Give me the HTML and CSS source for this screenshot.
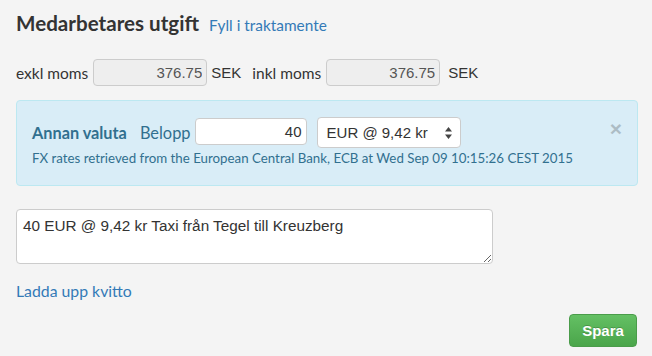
FILE: index.html
```html
<!DOCTYPE html>
<html lang="sv">
<head>
<meta charset="utf-8">
<title>Medarbetares utgift</title>
<link rel="stylesheet" href="styles.css">
</head>
<body>
<div class="page">
  <div class="header">
    <h2 class="title">Medarbetares utgift</h2>
    <a class="link" href="#">Fyll i traktamente</a>
  </div>

  <div class="amounts">
    <label class="lbl">exkl moms</label>
    <input class="amount" type="text" value="376.75" readonly>
    <span class="cur">SEK</span>
    <label class="lbl lbl-second">inkl moms</label>
    <input class="amount" type="text" value="376.75" readonly>
    <span class="cur cur-second">SEK</span>
  </div>

  <div class="alert">
    <div class="alert-row">
      <strong class="alert-title">Annan valuta</strong>
      <span class="alert-lbl">Belopp</span>
      <input class="belopp" type="text" value="40">
      <span class="select-wrap">
        <select class="currency"><option>EUR @ 9,42 kr</option></select>
        <svg class="select-arrows" width="7" height="12" viewBox="0 0 7 12"><path d="M3.5 0L7 4.5H0z M0 7.5H7L3.5 12z" fill="#444"/></svg>
      </span>
      <span class="close">&times;</span>
    </div>
    <p class="fx">FX rates retrieved from the European Central Bank, ECB at Wed Sep 09 10:15:26 CEST 2015</p>
  </div>

  <textarea class="note">40 EUR @ 9,42 kr Taxi från Tegel till Kreuzberg</textarea>

  <a class="link upload" href="#">Ladda upp kvitto</a>

  <div class="actions">
    <button class="btn-save" type="button">Spara</button>
  </div>
</div>
</body>
</html>
```

FILE: styles.css
```css
html, body {
  margin: 0;
  padding: 0;
  background: #f4f4f4;
}

body {
  font-family: Lato, "Open Sans", sans-serif;
  font-size: 15.5px;
  color: #333;
}

.page {
  padding: 0 14px 0 16px;
  display: flex;
  flex-direction: column;
}

.header {
  display: flex;
  align-items: baseline;
  margin-top: 11px;
  height: 24px;
}

.title {
  margin: 0;
  font-size: 20.6px;
  font-weight: 700;
  line-height: 24px;
  color: #333;
}

.link {
  color: #337ab7;
  text-decoration: none;
  font-size: 15.4px;
}

.header .link {
  margin-left: 10px;
}

.amounts {
  display: flex;
  align-items: center;
  margin-top: 24px;
  height: 27px;
}

.lbl {
  font-size: 15.5px;
  color: #333;
  margin-right: 5px;
}

.lbl-second {
  margin-left: 11px;
}

.amount {
  box-sizing: border-box;
  width: 114px;
  height: 27px;
  padding: 3px 4px;
  border: 1px solid #ccc;
  border-radius: 4px;
  background: #eee;
  font-family: "Liberation Sans", Arial, sans-serif;
  font-size: 15px;
  color: #555;
  text-align: right;
  outline: none;
}

.cur {
  margin-left: 4px;
  font-family: "Liberation Sans", Arial, sans-serif;
  font-size: 15px;
  color: #333;
}

.cur-second {
  margin-left: 8px;
}

.alert {
  margin-top: 14px;
  background: #d9edf7;
  border: 1px solid #bce8f1;
  border-radius: 4px;
  color: #31708f;
  padding: 16px 15px 18px 15px;
}

.alert-row {
  display: flex;
  align-items: center;
  height: 31px;
}

.alert-title {
  font-weight: 700;
  font-size: 16.3px;
}

.alert-lbl {
  margin-left: 13px;
  margin-right: 4px;
  font-size: 16.4px;
}

.belopp {
  box-sizing: border-box;
  width: 112px;
  height: 27px;
  margin-top: -2px;
  padding: 3px 4px;
  border: 1px solid #ccc;
  border-radius: 4px;
  background: #fff;
  font-family: "Liberation Sans", Arial, sans-serif;
  font-size: 15px;
  color: #333;
  text-align: right;
  outline: none;
}

.select-wrap {
  position: relative;
  margin-left: 10px;
  display: flex;
}

.currency {
  box-sizing: border-box;
  width: 144px;
  height: 31px;
  padding: 0 22px 0 9px;
  border: 1px solid #ccc;
  border-radius: 4px;
  background: #fff;
  font-family: "Liberation Sans", Arial, sans-serif;
  font-size: 15px;
  color: #333;
  -webkit-appearance: none;
  appearance: none;
  outline: none;
}

.select-arrows {
  position: absolute;
  right: 9px;
  top: 10px;
}

.close {
  margin-left: auto;
  margin-right: 0;
  font-family: "Liberation Sans", Arial, sans-serif;
  font-size: 21px;
  font-weight: 700;
  line-height: 1;
  color: #000;
  opacity: 0.2;
  margin-top: -9px;
}

.fx {
  margin: 2px 0 0 0;
  font-size: 13.3px;
  line-height: 17px;
}

.note {
  box-sizing: border-box;
  margin-top: 23px;
  width: 477px;
  height: 55px;
  padding: 6px 6px;
  border: 1px solid #ccc;
  border-radius: 4px;
  background: #fff;
  font-family: "Liberation Sans", Arial, sans-serif;
  font-size: 15.3px;
  line-height: 20px;
  color: #333;
  outline: none;
  resize: vertical;
}

.upload {
  margin-top: 17px;
  line-height: 20px;
  font-size: 15.8px;
  align-self: flex-start;
}

.actions {
  display: flex;
  justify-content: flex-end;
  margin-top: 13px;
}

.btn-save {
  box-sizing: border-box;
  height: 33px;
  width: 68px;
  margin-right: 1px;
  border: 1px solid #4a9c4a;
  border-radius: 4px;
  background: linear-gradient(to bottom, #64c064 0%, #4aa54a 100%);
  color: #fff;
  font-family: "Liberation Sans", Arial, sans-serif;
  font-size: 15px;
  font-weight: 700;
  text-shadow: 0 -1px 0 rgba(0,0,0,0.2);
  cursor: pointer;
}
```
